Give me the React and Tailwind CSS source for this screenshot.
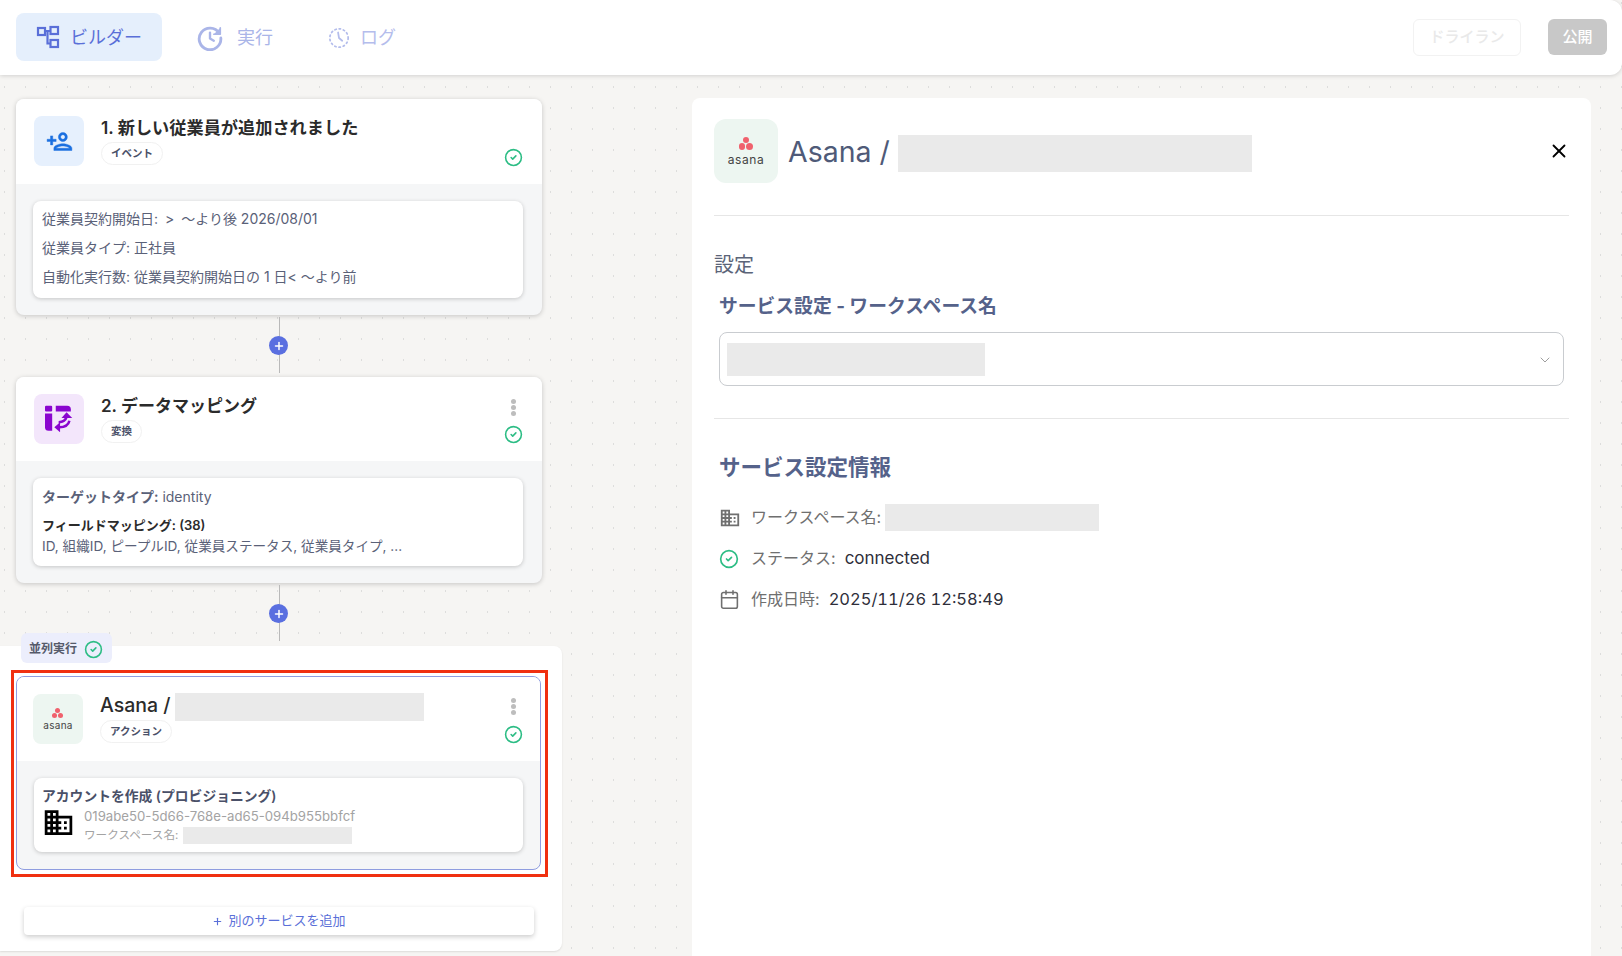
import React from "react";
import { CircleCheck, X, ChevronDown, Plus, Calendar } from "lucide-react";
import { MdDomain } from "react-icons/md";

const pageFont = "font-['Inter','Noto_Sans_CJK_JP',sans-serif]";

function BuilderIcon() {
  return (
    <svg width="24" height="24" viewBox="0 0 24 24" fill="none" stroke="#5a6fd8" strokeWidth="2.2">
      <rect x="2" y="3" width="7" height="7" />
      <rect x="14.5" y="2" width="7.5" height="7" />
      <rect x="14.5" y="15" width="7.5" height="7" />
      <path d="M9 6h5.5M11.5 6v12.5h3" />
    </svg>
  );
}

function HistoryIcon() {
  return (
    <svg width="26" height="26" viewBox="0 0 24 24" fill="none" stroke="#aab5e8" strokeWidth="2.6" strokeLinecap="round" strokeLinejoin="round">
      <path d="M20.5 7.5A10 10 0 1 0 22 12" />
      <path d="M21.5 2.5v6h-6" fill="#aab5e8" strokeWidth="1.5" />
      <path d="M12 7v5.500l3.500 2" strokeWidth="2.2" />
    </svg>
  );
}

function LogIcon() {
  return (
    <svg width="22" height="22" viewBox="0 0 24 24" fill="none" stroke="#b4bdec" strokeWidth="1.9" strokeLinecap="round">
      <circle cx="12" cy="12" r="10" strokeDasharray="1.5 3.200" />
      <path d="M11 6l1 6 3.500 3" />
    </svg>
  );
}

function PersonAddIcon() {
  return (
    <svg width="27" height="27" viewBox="0 0 24 24" fill="#1a6fe0" stroke="#1a6fe0" strokeWidth="0.4">
      <path d="M15 12c2.210 0 4-1.790 4-4s-1.790-4-4-4-4 1.790-4 4 1.790 4 4 4zm0-6c1.100 0 2 .9 2 2s-.9 2-2 2-2-.9-2-2 .9-2 2-2zm0 8c-2.670 0-8 1.340-8 4v2h16v-2c0-2.660-5.330-4-8-4zm-6 4c.22-.72 3.310-2 6-2 2.700 0 5.800 1.290 6 2H9zm-3-3v-3h3v-2H6V7H4v3H1v2h3v3h2z" />
    </svg>
  );
}

function MappingIcon() {
  return (
    <svg width="28" height="28" viewBox="48 80 78 78" fill="#8a06cf">
      <rect x="48" y="82" width="20" height="16" rx="3" />
      <path d="M78 82h32a10 10 0 0 1 10 10v6H78z" />
      <path d="M48 104h20v48H58a10 10 0 0 1-10-10z" />
      <path d="M108 100l16 16H94z" />
      <path d="M74 142l16-14v28z" />
      <path d="M86 128Q104 128 109 112M116 124Q112 142 88 142" fill="none" stroke="#8a06cf" strokeWidth="7" />
    </svg>
  );
}

function AsanaLogo({ big }) {
  const dot = big ? "w-[6.500px] h-[6.500px]" : "w-[5px] h-[5px]";
  return (
    <div className={big ? "flex flex-col items-center gap-[3px]" : "flex flex-col items-center gap-[2px]"}>
      <div className="flex flex-col items-center">
        <div className={`${dot} rounded-full bg-[#f0616d]`} />
        <div className="flex gap-[1px]">
          <div className={`${dot} rounded-full bg-[#f0616d]`} />
          <div className={`${dot} rounded-full bg-[#f0616d]`} />
        </div>
      </div>
      <span className={big ? "text-[12px] leading-[13px] tracking-[0.6px] text-[#444]" : "text-[10px] leading-[11px] tracking-[0.3px] text-[#444]"}>asana</span>
    </div>
  );
}

function Kebab({ gap }) {
  return (
    <div className="flex flex-col gap-[1px] mr-[7px]">
      <div className="w-[5px] h-[5px] rounded-full bg-[#bdbdbd]" />
      <div className="w-[5px] h-[5px] rounded-full bg-[#bdbdbd]" />
      <div className="w-[5px] h-[5px] rounded-full bg-[#bdbdbd]" />
    </div>
  );
}

function Check({ size = 19 }) {
  return <CircleCheck size={size} color="#2dbd85" strokeWidth={2} />;
}

function Chip({ children }) {
  return (
    <span className="inline-flex items-center h-[23px] px-[9px] rounded-full border border-[#f1f1f1] bg-white text-[10.500px] font-semibold text-[#4a5068]">
      {children}
    </span>
  );
}

function Connector() {
  return (
    <div className="relative h-[62px] flex justify-center w-[526px]">
      <div className="w-[1px] h-[56px] mt-[2px] bg-[#b9b9b9]" />
      <div className="absolute top-[21px] left-[253px] w-[19px] h-[19px] rounded-full bg-[#5a6fe0] flex items-center justify-center">
        <Plus size={12} color="white" strokeWidth={3} />
      </div>
    </div>
  );
}

function NodeCard({ icon, iconBg, title, chip, kebab, body, h, selected }) {
  return (
    <div className={selected
      ? "w-[525px] rounded-lg overflow-hidden bg-[#f5f6f7] border border-[#8f9de0]"
      : "w-[526px] rounded-lg overflow-hidden bg-[#f5f6f7] shadow-[0_1px_5px_rgba(0,0,0,0.2)]"}>
      <div className={`bg-white flex ${selected ? "pl-[16px] pr-[17px]" : "pl-[18px] pr-[19px]"} ${h}`}>
        <div className={`w-[50px] h-[50px] mt-[17px] rounded-lg flex items-center justify-center ${iconBg}`}>{icon}</div>
        <div className={`ml-[17px] flex-1 min-w-0 ${selected ? "mt-[15px]" : "mt-[17px]"}`}>
          {title}
          <div className="-mt-[1px]"><Chip>{chip}</Chip></div>
        </div>
        <div className={`flex flex-col items-end justify-end pb-[17px] ${selected ? "gap-[10px]" : "gap-[9px]"}`}>
          {kebab && <Kebab />}
          <Check />
        </div>
      </div>
      <div className={`pt-[17px] pb-[17px] pl-[17px] ${selected ? "pr-[17px]" : "pr-[19px]"}`}>
        <div className={`bg-white rounded-lg shadow-[0_1px_4px_rgba(0,0,0,0.2)] pr-[9px] ${selected ? "pl-[8px]" : "pl-[9px]"}`}>{body}</div>
      </div>
    </div>
  );
}

function InfoRow({ icon, label, children }) {
  return (
    <div className="flex items-center h-[41px] text-[16px]">
      <div className="w-[32px] flex items-center">{icon}</div>
      <span className="text-[#6f6f6f] -mt-[2px]">{label}</span>
      {children}
    </div>
  );
}

export default function App() {
  return (
    <div className={`${pageFont} w-[1622px] h-[956px] overflow-hidden flex flex-col bg-[#f6f5f3] bg-[radial-gradient(#c4c4c4_0.8px,transparent_1px)] bg-[length:21px_21px] bg-[position:-6px_-7.5px]`}>
      {/* top bar */}
      <div className="h-[75px] shrink-0 bg-white rounded-br-xl rounded-tr-xl shadow-[0_1px_4px_rgba(0,0,0,0.15)] flex items-center pl-[16px] pr-[15px] z-10">
        <div className="flex items-center gap-[10px] w-[146px] h-[48px] -mt-[1px] pl-[20px] rounded-lg bg-[#e5effc] text-[18px] text-[#5a6fd8]">
          <BuilderIcon />
          <span>ビルダー</span>
        </div>
        <div className="flex items-center gap-[14px] ml-[35px] text-[18px] text-[#aab5e8]">
          <HistoryIcon />
          <span>実行</span>
        </div>
        <div className="flex items-center gap-[10px] ml-[55px] text-[18px] text-[#b4bdec]">
          <LogIcon />
          <span>ログ</span>
        </div>
        <div className="ml-auto flex items-center gap-[27px] -mt-[1px]">
          <div className="w-[108px] h-[37px] rounded-md border border-[#f2f2f2] flex items-center justify-center text-[15px] font-medium text-[#e9e9e9]">ドライラン</div>
          <div className="w-[59px] h-[36px] rounded-md bg-[#c8c8c8] flex items-center justify-center text-[15px] font-medium text-white">公開</div>
        </div>
      </div>

      <div className="flex-1 flex min-h-0">
        {/* flow column */}
        <div className="w-[562px] shrink-0 pt-[24px]">
          <div className="pl-[16px]">
            <NodeCard
              icon={<PersonAddIcon />}
              iconBg="bg-[#e6f0fd]"
              h="h-[85px]"
              title={<div className="text-[17.200px] leading-[24px] font-semibold text-[#2b2b2b] whitespace-nowrap">1. 新しい従業員が追加されました</div>}
              chip="イベント"
              body={
                <div className="pt-[3px] pb-[7px] text-[14px] text-[#5a6178]">
                  <div className="h-[29px] flex items-center whitespace-pre">従業員契約開始日: <span className="mx-[3px]">&gt;</span> 〜より後 2026/08/01</div>
                  <div className="h-[29px] flex items-center">従業員タイプ: 正社員</div>
                  <div className="h-[29px] flex items-center whitespace-pre">自動化実行数: 従業員契約開始日の 1 日&lt; 〜より前</div>
                </div>
              }
            />
            <Connector />
            <NodeCard
              icon={<MappingIcon />}
              iconBg="bg-[#f3e6fb]"
              h="h-[84px]"
              kebab
              title={<div className="text-[17px] leading-[24px] font-semibold text-[#2b2b2b] whitespace-nowrap">2. データマッピング</div>}
              chip="変換"
              body={
                <div className="pt-[5px] pb-[9px] text-[14px] text-[#5a6178]">
                  <div className="h-[26px] flex items-center whitespace-pre"><b className="font-semibold">ターゲットタイプ:</b> identity</div>
                  <div className="h-[26px] flex items-end text-[13px] font-semibold text-[#2b2b2b]">フィールドマッピング: (38)</div>
                  <div className="h-[22px] flex items-center whitespace-nowrap text-[13.600px]">ID, 組織ID, ピープルID, 従業員ステータス, 従業員タイプ, ...</div>
                </div>
              }
            />
            <Connector />
          </div>

          {/* parallel group */}
          <div className="relative mt-[1px] h-[305px] bg-white rounded-r-lg pt-[24px] pl-[11px] shadow-[0_1px_2px_rgba(0,0,0,0.1)]">
            <div className="absolute -top-[13px] left-[21px] w-[91px] h-[30px] pt-[2px] rounded-md bg-[#eceefc] flex items-center pl-[8px] gap-[7px] text-[12px] font-semibold text-[#555a6a]">
              <span>並列実行</span>
              <Check />
            </div>
            <div className="w-[537px] h-[207px] border-[3px] border-[#f03010] pl-[2px] pt-[3px]">
              <NodeCard
                selected
                icon={<AsanaLogo />}
                iconBg="bg-[#edf6f1]"
                h="h-[84px]"
                kebab
                title={
                  <div className="flex items-start h-[26px] whitespace-nowrap">
                    <span className="text-[19.500px] leading-[26px] font-medium text-[#2b2b2b]">Asana /</span>
                    <div className="w-[249px] h-[28px] ml-[4px] mt-[1px] bg-[#eaeaea]" />
                  </div>
                }
                chip="アクション"
                body={
                  <div className="pt-[8px] h-[74px]">
                    <div className="text-[13.800px] leading-[20px] font-semibold text-[#4a5068]">アカウントを作成 (プロビジョニング)</div>
                    <div className="flex mt-[1px]">
                      <MdDomain size={33} color="#000" className="-mt-[1px]" />
                      <div className="ml-[9px]">
                        <div className="text-[13.200px] leading-[18px] text-[#a3a3a3]">019abe50-5d66-768e-ad65-094b955bbfcf</div>
                        <div className="flex items-center h-[21px] text-[11.600px] text-[#a3a3a3]">
                          <span>ワークスペース名:</span>
                          <div className="w-[169px] h-[17px] ml-[5px] bg-[#eaeaea]" />
                        </div>
                      </div>
                    </div>
                  </div>
                }
              />
            </div>
            <div className="mt-[30px] ml-[13px] w-[510px] h-[28px] rounded bg-white shadow-[0_2px_5px_rgba(0,0,0,0.2)] flex items-center justify-center gap-[5px] text-[13px] text-[#5a6fd8]">
              <Plus size={11} strokeWidth={2.5} />
              <span>別のサービスを追加</span>
            </div>
          </div>
        </div>

        {/* detail panel */}
        <div className="ml-[130px] mr-[31px] mt-[23px] flex-1 bg-white rounded-t-lg px-[22px] pt-[21px]">
          <div className="flex items-start h-[97px] border-b border-[#e6e6e6]">
            <div className="w-[64px] h-[64px] rounded-xl bg-[#edf6f1] flex items-center justify-center"><AsanaLogo big /></div>
            <span className="ml-[10px] mt-[13px] text-[28.500px] leading-[40px] text-[#4f5a78]">Asana /</span>
            <div className="w-[354px] h-[37px] ml-[8px] mt-[16px] bg-[#eaeaea]" />
            <X size={22} color="#000" strokeWidth={2} className="ml-auto mt-[21px] -mr-[1px]" />
          </div>
          <div className="mt-[34px] text-[20px] leading-[30px] text-[#5b6478]">設定</div>
          <div className="ml-[5px] mt-[14px] text-[18.800px] leading-[26px] font-bold text-[#55628a]">サービス設定 - ワークスペース名</div>
          <div className="ml-[5px] mr-[5px] mt-[12px] h-[54px] border border-[#c9ccd0] rounded-lg flex items-center pl-[7px] pr-[10px]">
            <div className="w-[258px] h-[33px] bg-[#eaeaea]" />
            <ChevronDown size={16} color="#8a8a8a" strokeWidth={1.25} className="ml-auto mt-[1px]" />
          </div>
          <div className="mt-[32px] border-t border-[#e6e6e6] pl-[5px] pt-[32px]">
            <div className="text-[21.500px] leading-[32px] font-bold text-[#55628a]">サービス設定情報</div>
            <div className="mt-[14px]">
              <InfoRow icon={<MdDomain size={22} color="#6f6f6f" />} label="ワークスペース名:">
                <div className="w-[214px] h-[27px] ml-[4px] bg-[#eaeaea]" />
              </InfoRow>
              <InfoRow icon={<Check size={20} />} label="ステータス:">
                <span className="ml-[9px] text-[17px] text-[#2e2e3a]">connected</span>
              </InfoRow>
              <InfoRow icon={<Calendar size={21} color="#6f6f6f" strokeWidth={1.8} />} label="作成日時:">
                <span className="ml-[9px] text-[16.500px] tabular-nums text-[#2e2e3a]">2025/11/26 12:58:49</span>
              </InfoRow>
            </div>
          </div>
        </div>
      </div>
    </div>
  );
}
